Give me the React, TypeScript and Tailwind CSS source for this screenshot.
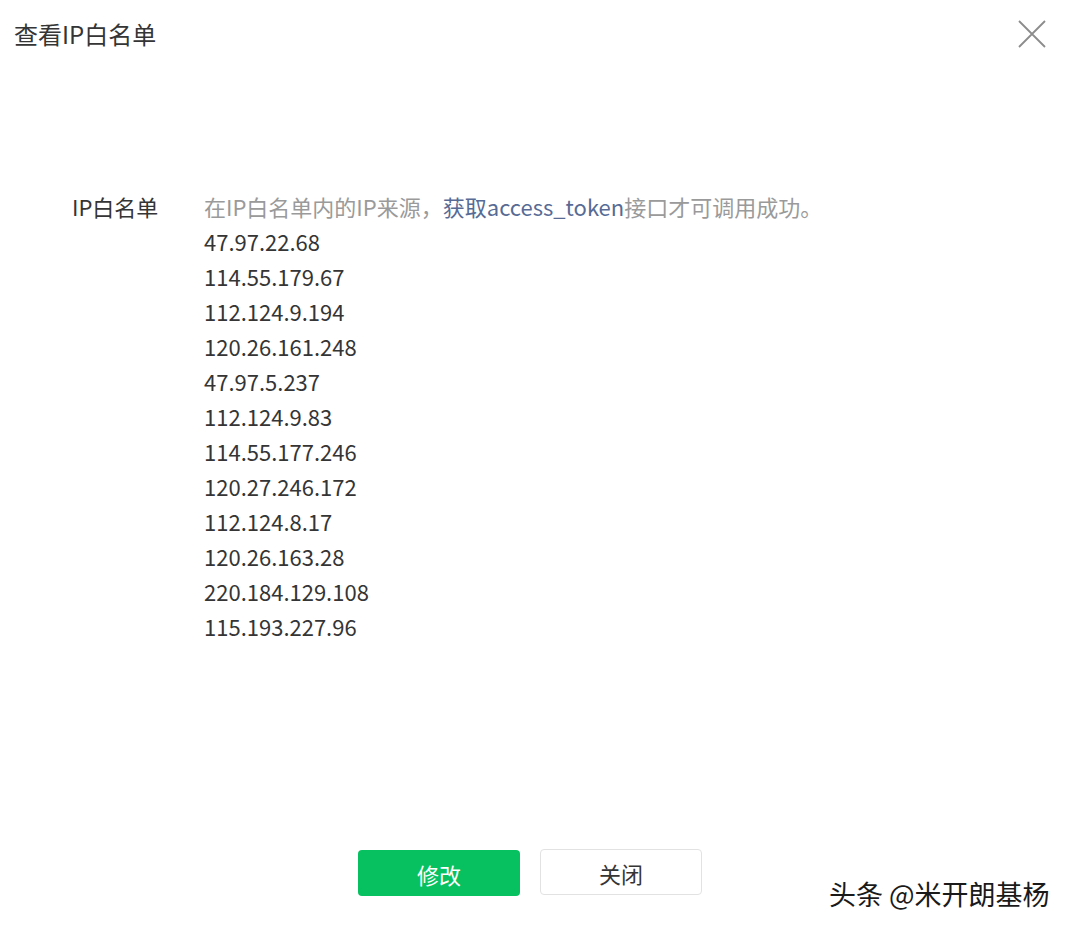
const ips = [
  "47.97.22.68",
  "114.55.179.67",
  "112.124.9.194",
  "120.26.161.248",
  "47.97.5.237",
  "112.124.9.83",
  "114.55.177.246",
  "120.27.246.172",
  "112.124.8.17",
  "120.26.163.28",
  "220.184.129.108",
  "115.193.227.96",
];

const font = { fontFamily: '"Noto Sans CJK SC", "Noto Sans", sans-serif' };

const App = () => {
  return (
    <div
      className="relative w-[1080px] h-[933px] bg-white text-[#353535] overflow-hidden"
      style={font}
    >
      {/* Header */}
      <div className="pt-[18px] pl-[14px]">
        <h1 className="text-[24px] leading-[32px] font-normal">查看IP白名单</h1>
      </div>
      <button className="absolute top-[20px] right-[34px] w-[28px] h-[28px]" aria-label="关闭">
        <svg viewBox="0 0 28 28" className="w-[28px] h-[28px]" fill="none" stroke="#8c8c8c" strokeWidth="1.8">
          <path d="M1 1L27 27M27 1L1 27" />
        </svg>
      </button>

      {/* Body */}
      <div className="mt-[139px] flex text-[22px] leading-[35px]">
        <div className="w-[204px] pl-[72px] shrink-0">IP白名单</div>
        <div className="flex flex-col">
          <p className="text-[#9a9a9a]">
            在IP白名单内的IP来源，<span className="text-[#576b95]">获取access_token</span>接口才可调用成功。
          </p>
          {ips.map((ip) => (
            <div key={ip}>{ip}</div>
          ))}
        </div>
      </div>

      {/* Footer */}
      <div className="mt-[206px] pl-[358px] flex gap-[20px]">
        <button className="w-[162px] h-[46px] rounded-[4px] bg-[#07c160] text-white text-[22px] pt-[2px]">修改</button>
        <button className="w-[162px] h-[46px] -mt-[1px] rounded-[4px] border border-[#e2e2e2] bg-white text-[#353535] text-[22px] pt-[2px]">
          关闭
        </button>
      </div>

      {/* Watermark */}
      <div
        className="absolute left-[829px] top-[876px] text-[27px] leading-[36px] text-[#1a1a1a] font-normal"
        style={{ textShadow: "1px 1px 0 #fff, -1px -1px 0 #fff, 1px -1px 0 #fff, -1px 1px 0 #fff" }}
      >
        头条 @米开朗基杨
      </div>
    </div>
  );
};

export default App;
